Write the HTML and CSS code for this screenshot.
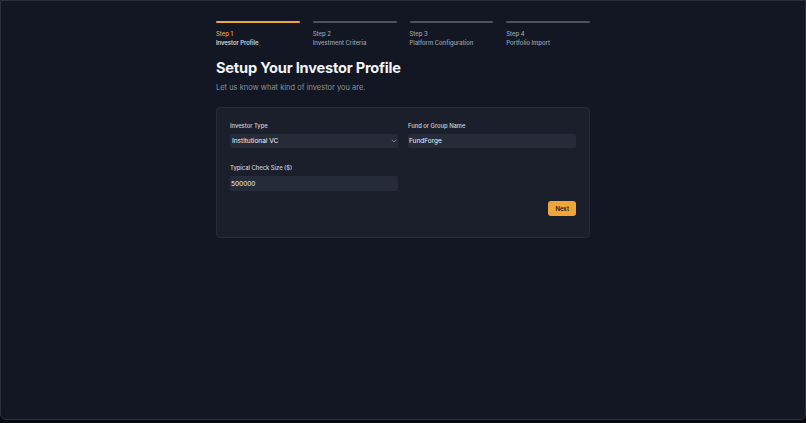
FILE: index.html
```html
<!DOCTYPE html>
<html lang="en">
<head>
<meta charset="utf-8">
<title>Setup Your Investor Profile</title>
<link rel="stylesheet" href="styles.css">
</head>
<body>
<div class="frame">
  <main class="wrap">
    <ol class="steps">
      <li class="step active"><span class="bar"></span><span class="num">Step 1</span><span class="name">Investor Profile</span></li>
      <li class="step"><span class="bar"></span><span class="num">Step 2</span><span class="name">Investment Criteria</span></li>
      <li class="step"><span class="bar"></span><span class="num">Step 3</span><span class="name">Platform Configuration</span></li>
      <li class="step"><span class="bar"></span><span class="num">Step 4</span><span class="name">Portfolio Import</span></li>
    </ol>
    <h1 class="title">Setup Your Investor Profile</h1>
    <p class="subtitle">Let us know what kind of investor you are.</p>
    <section class="card">
      <div class="grid">
        <label class="field">
          <span class="label">Investor Type</span>
          <span class="control select">Institutional VC
            <svg class="chev" viewBox="0 0 10 10" width="6" height="6"><path d="M2 3.5 L5 6.5 L8 3.5" fill="none" stroke="#9ca3af" stroke-width="1.3" stroke-linecap="round" stroke-linejoin="round"/></svg>
          </span>
        </label>
        <label class="field">
          <span class="label">Fund or Group Name</span>
          <span class="control">FundForge</span>
        </label>
        <label class="field">
          <span class="label">Typical Check Size ($)</span>
          <span class="control tall">500000</span>
        </label>
      </div>
      <div class="actions"><button class="btn">Next</button></div>
    </section>
  </main>
</div>
</body>
</html>
```
FILE: styles.css
```css
* { box-sizing: border-box; }
html, body { margin: 0; padding: 0; }
body {
  background: #07090d;
  font-family: Inter, "Noto Sans", sans-serif;
  color: #e5e7eb;
  height: 423px;
  overflow: hidden;
}
.frame {
  height: 420px;
  background: #121723;
  border: 1px solid #2a303c;
  border-radius: 0 0 6px 6px;
  padding-top: 20px;
}
.wrap {
  width: 374px;
  margin: 0 auto;
}
.steps {
  list-style: none;
  margin: 0;
  padding: 0;
  display: grid;
  grid-template-columns: repeat(4, 1fr);
  gap: 13px;
}
.step { display: flex; flex-direction: column; }
.bar {
  height: 2px;
  background: #4b5260;
  border-radius: 1px;
  margin-bottom: 6px;
}
.num, .name { font-size: 5.9px; color: #9ca3af; line-height: 9px; font-weight: 500; }
.step.active .bar { background: #f0a53a; }
.step.active .num { color: #e9a245; }
.step.active .name { color: #e5e7eb; }
.title {
  margin: 11px 0 0;
  font-size: 14.6px;
  line-height: 20px;
  font-weight: 700;
  color: #f3f4f6;
  letter-spacing: -0.2px;
}
.subtitle {
  margin: 4px 0 0;
  font-size: 7.5px;
  line-height: 12px;
  color: #8b919c;
}
.card {
  margin-top: 13px;
  background: #1a1f2b;
  border: 1px solid #252b37;
  border-radius: 4px;
  padding: 13px 13px 21px;
}
.grid {
  display: grid;
  grid-template-columns: 1fr 1fr;
  column-gap: 10px;
  row-gap: 15px;
}
.field { display: flex; flex-direction: column; }
.label {
  font-size: 5.8px;
  line-height: 9px;
  color: #cfd3da;
  font-weight: 500;
  margin-bottom: 4px;
}
.control {
  height: 14px;
  background: #252b38;
  border-radius: 2px;
  padding: 0 1px;
  font-size: 6.5px;
  line-height: 14px;
  color: #f3f4f6;
  display: flex;
  align-items: center;
}
.control.tall { height: 15px; }
.select { justify-content: space-between; padding-left: 2px; }
.actions {
  display: flex;
  justify-content: flex-end;
  margin-top: 10px;
}
.btn {
  background: #f0a53a;
  color: #1a1a1a;
  border: none;
  border-radius: 3px;
  font-family: inherit;
  font-size: 6px;
  font-weight: 600;
  height: 15px;
  padding: 0 7px;
}
```
